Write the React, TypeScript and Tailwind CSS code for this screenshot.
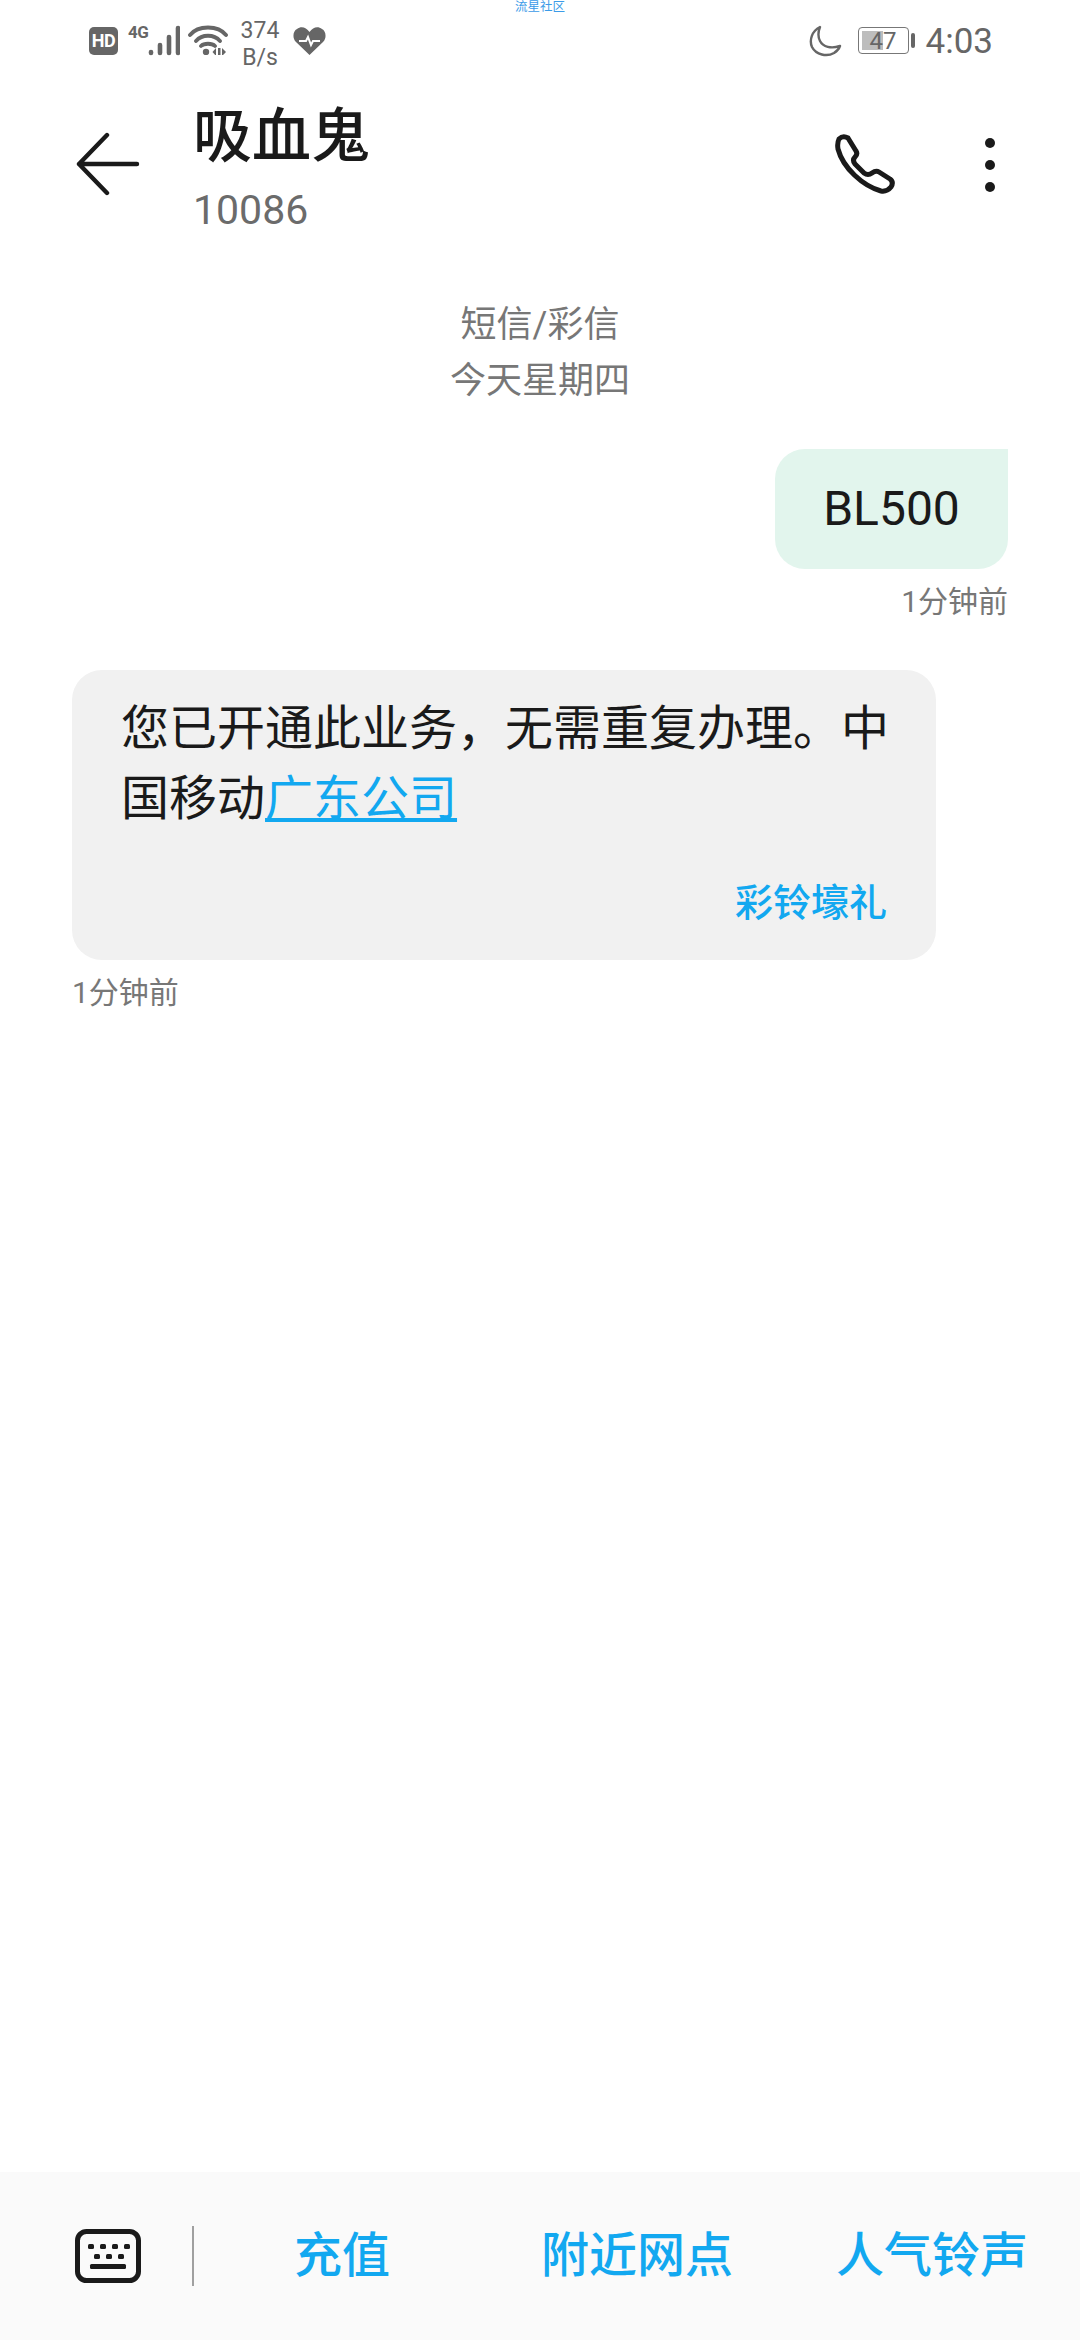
function StatusBar() {
  return (
    <div className="relative h-[82px] shrink-0 text-[#666]">
      <span className="absolute left-[515px] top-0 text-[12.5px] leading-[13px] text-[#3b9be8]">流星社区</span>
      <div className="flex h-full items-start pl-[89px] pr-[90px] pt-[25px]">
        <div className="mt-[2px] flex h-[28px] w-[29px] items-center justify-center rounded-[5px] bg-[#666] text-[18px] font-bold leading-none tracking-[-0.5px] text-white">HD</div>
        <span className="ml-[10px] w-[19px] text-[17px] font-bold leading-[15px] tracking-[-0.5px]">4G</span>
        <svg className="h-[31px] w-[33px]" viewBox="0 0 33 31">
          <g fill="none" stroke="#666" strokeLinecap="round" strokeWidth="4.6">
            <path d="M4 27v1M13 20v8M22 12v16M31 3v25" />
          </g>
        </svg>
        <svg className="ml-[8px] h-[30px] w-[40px]" viewBox="0 0 40 30">
          <g fill="none" stroke="#666" strokeLinecap="round" strokeWidth="3.8">
            <path d="M2 10C10 0 30 0 38 10M8 16C14 9 26 9 32 16M13 21C16 18 24 18 27 21" />
          </g>
          <circle cx="18" cy="27" r="3.2" fill="#666" />
          <path d="M28 23l-3.5 4 3.5 4zM30 23v8h2.5v-8zM34 23l4 4-4 4z" fill="#666" />
        </svg>
        <div className="ml-[12px] mt-[-8px] flex w-[40px] flex-col items-center text-[23px] leading-[27px]">
          <span>374</span>
          <span>B/s</span>
        </div>
        <svg className="ml-[13px] mt-[2px] h-[28px] w-[33px]" viewBox="0 0 33 28">
          <path d="M16.5 28L3 15C-1 11 0 4 4 2c4-3 9-2 12.5 3C20 0 25-1 29 2c4 2 5 9 1 13z" fill="#666" />
          <path d="M6 14h7l2-4 3 8 2-4h7" fill="none" stroke="#fff" strokeWidth="2" />
        </svg>
        <div className="flex-1" />
        <svg className="mr-[1px] h-[32px] w-[34px]" viewBox="0 0 34 32">
          <path d="M12 2C4 6 1 15 4 22c4 8 15 10 22 6 3-2 5-4 6-7-9 3-17 1-20-5-2-4-2-9 0-14z" fill="none" stroke="#666" strokeWidth="2.4" strokeLinejoin="round" />
        </svg>
        <div className="relative ml-[15px] mt-[2px] h-[27px] w-[51px] rounded-[4px] border-[1.5px] border-[#777] p-[3px]">
          <div className="h-full w-[21px] bg-[#bdbdbd]" />
          <span className="absolute inset-0 flex items-center justify-center text-[24px] leading-none">47</span>
        </div>
        <div className="ml-[2px] mt-[8px] h-[15px] w-[4px] rounded-[2px] bg-[#666]" />
        <span className="ml-[11px] mr-[-3px] mt-[-3px] text-[35px] leading-[40px]">4:03</span>
      </div>
    </div>
  );
}

function Header() {
  return (
    <div className="flex h-[162px] shrink-0 items-start">
      <svg className="ml-[76px] mt-[50px] h-[64px] w-[64px]" viewBox="0 0 64 64" fill="none" stroke="#1a1a1a" strokeWidth="4.4" strokeLinecap="round" strokeLinejoin="round">
        <path d="M31 3L3 32l28 29M3 32h58" />
      </svg>
      <div className="ml-[53px] flex flex-col">
        <span className="mt-[21px] text-[59px] font-medium leading-[68px] text-[#1a1a1a]">吸血鬼</span>
        <span className="mt-[15px] text-[41px] leading-[48px] text-[#6b6b6b]">10086</span>
      </div>
      <div className="flex-1" />
      <svg className="mt-[52px] h-[60px] w-[60px]" viewBox="0 0 60 60" fill="none" stroke="#1a1a1a" strokeWidth="5" strokeLinejoin="round">
        <path d="M4 5Q8 1 13 4L21 17Q23 20 20 23Q17 26 20 30L29 39Q33 42 37 39Q41 36 44 38L55 45Q59 48 56 53Q52 58 46 57C28 52 8 34 3 15Q2 9 4 5Z" />
      </svg>
      <div className="ml-[90px] mr-[85px] mt-[56px] flex flex-col gap-[12px]">
        <div className="h-[10px] w-[10px] rounded-full bg-[#1a1a1a]" />
        <div className="h-[10px] w-[10px] rounded-full bg-[#1a1a1a]" />
        <div className="h-[10px] w-[10px] rounded-full bg-[#1a1a1a]" />
      </div>
    </div>
  );
}

function Conversation() {
  return (
    <div className="flex flex-1 flex-col">
      <div className="mt-[53px] flex flex-col items-center text-[36px] leading-[56px] text-[#777]">
        <span>短信/彩信</span>
        <span>今天星期四</span>
      </div>
      <div className="mr-[72px] mt-[40px] flex flex-col items-end">
        <div className="flex h-[120px] w-[233px] items-center justify-center rounded-[30px] rounded-tr-none bg-[#e2f5ed] text-[48px] text-[#1a1a1a]">BL500</div>
        <span className="mt-[13px] text-[30px] leading-[40px] text-[#777]">1分钟前</span>
      </div>
      <div className="ml-[72px] mt-[48px] flex flex-col items-start">
        <div className="h-[290px] w-[864px] rounded-[30px] bg-[#f1f1f1] pl-[49px] pr-[47px] pt-[24px]">
          <p className="text-[48px] leading-[70px] text-[#1a1a1a]">
            您已开通此业务，无需重复办理。中国移动<span className="text-[#12a8f0] underline">广东公司</span>
          </p>
          <p className="mt-[44px] pr-[2px] text-right text-[38px] font-medium leading-[50px] text-[#12a8f0]">彩铃壕礼</p>
        </div>
        <span className="mt-[13px] text-[30px] leading-[40px] text-[#777]">1分钟前</span>
      </div>
    </div>
  );
}

function BottomBar() {
  return (
    <div className="flex h-[168px] shrink-0 items-center bg-[#fafafa]">
      <svg className="ml-[75px] h-[54px] w-[66px]" viewBox="0 0 66 54">
        <rect x="2.5" y="2.5" width="61" height="49" rx="9" fill="none" stroke="#1a1a1a" strokeWidth="5" />
        <g fill="#1a1a1a">
          <rect x="13" y="15" width="6" height="5" rx="1.5" />
          <rect x="25" y="15" width="6" height="5" rx="1.5" />
          <rect x="37" y="15" width="6" height="5" rx="1.5" />
          <rect x="49" y="15" width="6" height="5" rx="1.5" />
          <rect x="19" y="25" width="6" height="5" rx="1.5" />
          <rect x="31" y="25" width="6" height="5" rx="1.5" />
          <rect x="43" y="25" width="6" height="5" rx="1.5" />
          <rect x="15" y="35" width="36" height="5" rx="1.5" />
        </g>
      </svg>
      <div className="ml-[51px] h-[60px] w-[2px] bg-[#a0a0a0]" />
      <div className="flex flex-1 items-center text-[48px] font-medium leading-[60px] text-[#12a8f0]">
        <span className="ml-[100px]">充值</span>
        <span className="ml-[151px]">附近网点</span>
        <span className="ml-[103px]">人气铃声</span>
      </div>
    </div>
  );
}

export default function App() {
  return (
    <div className="flex h-[2340px] w-[1080px] flex-col overflow-hidden bg-white font-[Roboto,'Noto_Sans_CJK_SC',sans-serif]">
      <StatusBar />
      <Header />
      <Conversation />
      <BottomBar />
    </div>
  );
}
